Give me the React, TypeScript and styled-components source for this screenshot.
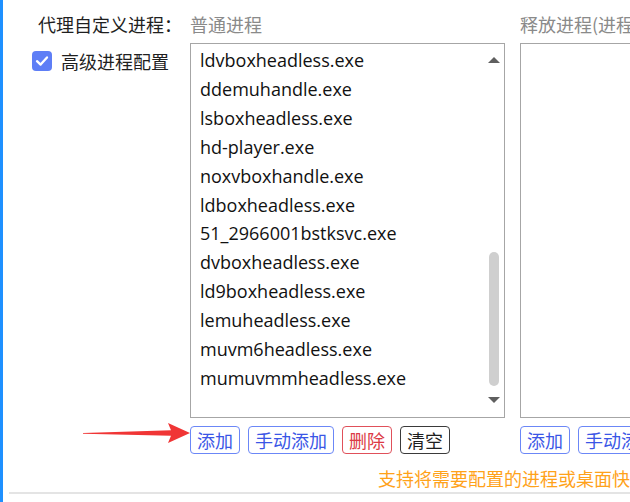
import React from "react";
import styled, { createGlobalStyle } from "styled-components";

const GlobalStyle = createGlobalStyle`
  html, body {
    margin: 0;
    padding: 0;
    background: #ffffff;
    overflow: hidden;
  }
  body {
    font-family: "Open Sans", "Noto Sans CJK SC", sans-serif;
  }
`;

const StyledPage = styled.div`
  width: 630px;
  height: 502px;
  box-sizing: border-box;
  border-left: 3px solid #1e90ff;
  overflow: hidden;
  font-size: 18px;
  color: #1a1a1a;
`;

const StyledGrid = styled.div`
  display: grid;
  grid-template-columns: 172px 315px 220px;
  grid-template-rows: 43px 375px 36px;
  column-gap: 15px;
`;

const StyledTitle = styled.div<{ $muted?: boolean; $indent?: number }>`
  padding-top: 12px;
  padding-left: ${(p) => p.$indent ?? 0}px;
  line-height: 24px;
  white-space: nowrap;
  font-family: "Noto Sans CJK SC", sans-serif;
  color: ${(p) => (p.$muted ? "#8a8a8a" : "#1f1f1f")};
`;

const StyledCheckRow = styled.label`
  display: flex;
  align-items: center;
  gap: 9px;
  padding: 8px 0 0 29px;
  align-self: start;
  line-height: 20px;
  font-family: "Noto Sans CJK SC", sans-serif;
  color: #1f1f1f;
`;

const StyledCheckBox = styled.span`
  display: flex;
  align-items: center;
  justify-content: center;
  width: 20px;
  height: 20px;
  border-radius: 4px;
  background: #5e7ef6;
`;

const StyledListBox = styled.div`
  display: flex;
  box-sizing: border-box;
  height: 375px;
  border: 1px solid #a6a6a6;
  background: #ffffff;
`;

const StyledItems = styled.ul`
  flex: 1;
  margin: 0;
  padding: 2px 0 0 9px;
  list-style: none;
  font-size: 18px;
  line-height: 28.9px;
  color: #111111;
  white-space: nowrap;
`;

const StyledScrollBar = styled.div`
  display: flex;
  flex-direction: column;
  align-items: center;
  width: 16px;
  margin-right: 2px;
  padding: 13px 0 14px;
`;

const StyledTrack = styled.div`
  flex: 1;
  display: flex;
  flex-direction: column;
  justify-content: flex-end;
  padding-bottom: 11px;
`;

const StyledThumb = styled.div`
  width: 10px;
  height: 134px;
  border-radius: 5px;
  background: #cfcfcf;
`;

const StyledButtons = styled.div`
  display: flex;
  gap: 8px;
  padding-top: 8px;
`;

const tones = {
  blue: { border: "#6b87f7", text: "#3a56e6" },
  red: { border: "#e0505a", text: "#dc3a45" },
  dark: { border: "#3a3a3a", text: "#1f1f1f" },
};

const StyledButton = styled.button<{ $tone: keyof typeof tones }>`
  box-sizing: border-box;
  height: 28px;
  padding: 0 6px;
  border: 1px solid ${(p) => tones[p.$tone].border};
  border-radius: 4px;
  background: #ffffff;
  color: ${(p) => tones[p.$tone].text};
  font-family: "Noto Sans CJK SC", sans-serif;
  font-size: 18px;
  line-height: 26px;
  white-space: nowrap;
`;

const StyledArrowCell = styled.div`
  position: relative;
`;

const StyledArrow = styled.svg`
  position: absolute;
  left: 80px;
  top: 4px;
`;

const StyledFooter = styled.div`
  margin-left: 6px;
  padding: 12px 0 2px 369px;
  border-bottom: 2px solid #e4e4e4;
  line-height: 24px;
  white-space: nowrap;
  font-family: "Noto Sans CJK SC", sans-serif;
  color: #ffa21a;
`;

const processes = [
  "ldvboxheadless.exe",
  "ddemuhandle.exe",
  "lsboxheadless.exe",
  "hd-player.exe",
  "noxvboxhandle.exe",
  "ldboxheadless.exe",
  "51_2966001bstksvc.exe",
  "dvboxheadless.exe",
  "ld9boxheadless.exe",
  "lemuheadless.exe",
  "muvm6headless.exe",
  "mumuvmmheadless.exe",
];

const Triangle = ({ up }: { up?: boolean }) => (
  <svg width="12" height="6" viewBox="0 0 12 6">
    <polygon points={up ? "0,6 6,0 12,6" : "0,0 12,0 6,6"} fill="#5f5f5f" />
  </svg>
);

const ProcessList = ({ items, scroll }: { items: string[]; scroll?: boolean }) => (
  <StyledListBox>
    <StyledItems>
      {items.map((name) => (
        <li key={name}>{name}</li>
      ))}
    </StyledItems>
    {scroll && (
      <StyledScrollBar>
        <Triangle up />
        <StyledTrack>
          <StyledThumb />
        </StyledTrack>
        <Triangle />
      </StyledScrollBar>
    )}
  </StyledListBox>
);

const App = () => {
  return (
    <StyledPage>
      <GlobalStyle />
      <StyledGrid>
        <StyledTitle $indent={35}>代理自定义进程：</StyledTitle>
        <StyledTitle $muted>普通进程</StyledTitle>
        <StyledTitle $muted>释放进程(进程名)</StyledTitle>

        <StyledCheckRow>
          <StyledCheckBox>
            <svg width="16" height="16" viewBox="0 0 16 16">
              <path d="M3 8.2 L6.6 11.6 L13 4.4" fill="none" stroke="#ffffff" strokeWidth="2.3" strokeLinecap="round" strokeLinejoin="round" />
            </svg>
          </StyledCheckBox>
          高级进程配置
        </StyledCheckRow>
        <ProcessList items={processes} scroll />
        <ProcessList items={[]} />

        <StyledArrowCell>
          <StyledArrow width="107" height="22" viewBox="0 0 107 22">
            <polygon points="0,11 88,8.2 85,1 107,11 85,21 88,13.8 0,11.8" fill="#f03535" />
          </StyledArrow>
        </StyledArrowCell>
        <StyledButtons>
          <StyledButton $tone="blue">添加</StyledButton>
          <StyledButton $tone="blue">手动添加</StyledButton>
          <StyledButton $tone="red">删除</StyledButton>
          <StyledButton $tone="dark">清空</StyledButton>
        </StyledButtons>
        <StyledButtons>
          <StyledButton $tone="blue">添加</StyledButton>
          <StyledButton $tone="blue">手动添加</StyledButton>
        </StyledButtons>
      </StyledGrid>
      <StyledFooter>支持将需要配置的进程或桌面快捷方式拖入列表中</StyledFooter>
    </StyledPage>
  );
};

export default App;
